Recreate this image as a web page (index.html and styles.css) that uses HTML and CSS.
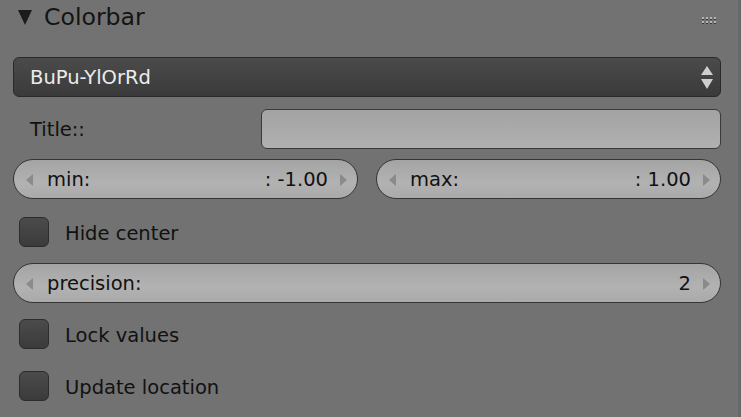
FILE: index.html
```html
<!DOCTYPE html>
<html>
<head>
<meta charset="utf-8">
<link rel="stylesheet" href="styles.css">
</head>
<body>
<div class="panel">
  <div class="header">
    <span class="tri"></span>
    <span class="title">Colorbar</span>
    <svg class="grip" width="16" height="8" viewBox="0 0 16 8">
      <g fill="#3a3a3a">
        <rect x="0" y="1" width="2" height="2"/><rect x="4" y="1" width="2" height="2"/><rect x="8" y="1" width="2" height="2"/><rect x="12" y="1" width="2" height="2"/>
        <rect x="0" y="5" width="2" height="2"/><rect x="4" y="5" width="2" height="2"/><rect x="8" y="5" width="2" height="2"/><rect x="12" y="5" width="2" height="2"/>
      </g>
      <g fill="#b4b4b4">
        <rect x="0" y="0" width="2" height="2"/><rect x="4" y="0" width="2" height="2"/><rect x="8" y="0" width="2" height="2"/><rect x="12" y="0" width="2" height="2"/>
        <rect x="0" y="4" width="2" height="2"/><rect x="4" y="4" width="2" height="2"/><rect x="8" y="4" width="2" height="2"/><rect x="12" y="4" width="2" height="2"/>
      </g>
    </svg>
  </div>
  <div class="body">
    <div class="dropdown">
      <span>BuPu-YlOrRd</span>
      <span class="updown"><span class="up"></span><span class="down"></span></span>
    </div>
    <div class="row-title">
      <span class="label">Title::</span>
      <div class="textfield"></div>
    </div>
    <div class="row-pair">
      <div class="num"><span class="al"></span><span class="nl">min:</span><span class="nv">: -1.00</span><span class="ar"></span></div>
      <div class="num"><span class="al"></span><span class="nl">max:</span><span class="nv">: 1.00</span><span class="ar"></span></div>
    </div>
    <div class="check"><span class="box"></span><span class="ct">Hide center</span></div>
    <div class="num wide"><span class="al"></span><span class="nl">precision:</span><span class="nv">2</span><span class="ar"></span></div>
    <div class="check"><span class="box"></span><span class="ct">Lock values</span></div>
    <div class="check"><span class="box"></span><span class="ct">Update location</span></div>
  </div>
</div>
</body>
</html>
```
FILE: styles.css
```css
html, body {
  margin: 0;
  padding: 0;
}
body {
  width: 741px;
  height: 417px;
  background: #727272;
  font-family: "DejaVu Sans", sans-serif;
  font-size: 19.5px;
  color: #111111;
  overflow: hidden;
}
.panel {
  width: 738px;
  height: 417px;
  border-right: 3px solid #686868;
}
.header {
  height: 37px;
  display: flex;
  align-items: center;
  position: relative;
}
.tri {
  width: 0;
  height: 0;
  margin-left: 18px;
  margin-top: -3px;
  border-left: 7.5px solid transparent;
  border-right: 7.5px solid transparent;
  border-top: 15px solid #1c1c1c;
}
.title {
  margin-left: 12px;
  font-size: 23.6px;
  color: #141414;
  margin-top: -3px;
}
.grip {
  position: absolute;
  left: 702px;
  top: 17px;
}
.body {
  padding: 20px 17px 0 13px;
  display: flex;
  flex-direction: column;
}
.dropdown {
  height: 40px;
  box-sizing: border-box;
  border: 1px solid #2a2a2a;
  border-radius: 6px;
  background: linear-gradient(#4b4b4b, #3a3a3a);
  color: #ececec;
  display: flex;
  align-items: center;
  justify-content: space-between;
  padding: 0 7px 0 16px;
}
.updown {
  display: flex;
  flex-direction: column;
  gap: 4px;
}
.up, .down {
  width: 0;
  height: 0;
  border-left: 6px solid transparent;
  border-right: 6px solid transparent;
}
.up { border-bottom: 9px solid #cfcfcf; }
.down { border-top: 10px solid #cfcfcf; }
.row-title {
  margin-top: 12px;
  height: 40px;
  display: grid;
  grid-template-columns: 240px 1fr;
  column-gap: 8px;
  align-items: center;
}
.label {
  padding-left: 17px;
  padding-top: 1px;
}
.textfield {
  height: 40px;
  box-sizing: border-box;
  border: 1px solid #3a3a3a;
  border-radius: 6px;
  background: linear-gradient(#a3a3a3, #b0b0b0);
}
.row-pair {
  margin-top: 10px;
  display: grid;
  grid-template-columns: 1fr 1fr;
  column-gap: 18px;
}
.num {
  height: 40px;
  box-sizing: border-box;
  border: 1.5px solid #353535;
  border-radius: 20px;
  background: linear-gradient(#a4a4a4, #b2b2b2 60%, #aaaaaa);
  display: flex;
  align-items: center;
  padding: 1px 10px 0 12px;
}
.num .nl {
  flex: 1;
  margin-left: 14px;
}
.num .nv {
  margin-right: 12px;
}
.al, .ar {
  width: 0;
  height: 0;
  border-top: 6px solid transparent;
  border-bottom: 6px solid transparent;
}
.al { border-right: 7px solid #8a8a8a; }
.ar { border-left: 7px solid #8a8a8a; }
.num.wide {
  margin-top: 16px;
}
.check {
  height: 30px;
  display: flex;
  align-items: center;
  padding-left: 6px;
}
.ct {
  padding-top: 2px;
}
.row-pair + .check { margin-top: 18px; }
.num.wide + .check { margin-top: 16px; }
.check + .check { margin-top: 22px; }
.box {
  width: 30px;
  height: 30px;
  box-sizing: border-box;
  border: 1px solid #2c2c2c;
  border-radius: 6px;
  background: linear-gradient(#4b4b4b, #3b3b3b);
  margin-right: 16px;
}
```
